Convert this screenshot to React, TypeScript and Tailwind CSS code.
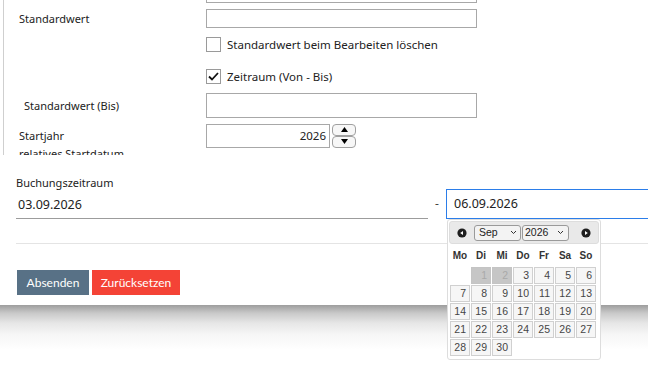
import React from "react";

const Chevron = () => (
  <svg width="7" height="5" viewBox="0 0 7 5" className="ml-auto">
    <path d="M1 1 L3.5 3.5 L6 1" fill="none" stroke="#333" strokeWidth="1" />
  </svg>
);

const Circ = ({ dir }: { dir: "l" | "r" }) => (
  <svg width="10" height="10" viewBox="0 0 10 10">
    <circle cx="5" cy="5" r="4.6" fill="#1e1e1e" />
    {dir === "l" ? (
      <path d="M3.2 5 L6 3 L6 7 Z" fill="#fff" />
    ) : (
      <path d="M6.8 5 L4 3 L4 7 Z" fill="#fff" />
    )}
  </svg>
);

export default function App() {
  const days: (number | null)[] = [null, 1, 2, 3, 4, 5, 6];
  for (let d = 7; d <= 30; d++) days.push(d);
  const names = ["Mo", "Di", "Mi", "Do", "Fr", "Sa", "So"];

  return (
    <div className="relative w-[648px] h-[383px] overflow-hidden bg-white text-[#222]" style={{ fontFamily: '"Noto Sans", sans-serif' }}>
      {/* Top scrolled panel */}
      <div className="ml-[3px] h-[155px] overflow-hidden border-l border-[#cfcfcf]">
        <div className="mt-[-19px] flex flex-col text-[11px]">
          <div className="flex">
            <div className="w-[202px]" />
            <div className="w-[271px] h-[22px] border border-[#a8a8a8] bg-white" />
          </div>
          <div className="flex items-center mt-[6px]">
            <div className="w-[202px] pl-[15px] pt-[2px]">Standardwert</div>
            <div className="w-[271px] h-[19px] border border-[#a8a8a8] bg-white" />
          </div>
          <div className="flex items-center mt-[8px]">
            <div className="w-[202px]" />
            <div className="w-[15px] h-[15px] border border-[#9a9a9a] bg-white" />
            <span className="ml-[6px] text-[11.5px]">Standardwert beim Bearbeiten löschen</span>
          </div>
          <div className="flex items-center mt-[15px]">
            <div className="w-[202px]" />
            <div className="w-[15px] h-[15px] border border-[#9a9a9a] bg-white flex items-center justify-center">
              <svg width="11" height="9" viewBox="0 0 11 9">
                <path d="M1 4.5 L4 7.5 L10 1" fill="none" stroke="#111" strokeWidth="1.8" />
              </svg>
            </div>
            <span className="ml-[6px] text-[11.5px]">Zeitraum (Von - Bis)</span>
          </div>
          <div className="flex items-center mt-[7px]">
            <div className="w-[202px] pl-[20px] pt-[3px]">Standardwert (Bis)</div>
            <div className="w-[271px] h-[25px] border border-[#a8a8a8] bg-white" />
          </div>
          <div className="flex items-center mt-[6px]">
            <div className="w-[202px] pl-[15px] pt-[2px]">Startjahr</div>
            <div className="w-[124px] h-[24px] border border-[#a8a8a8] bg-white flex items-center justify-end pr-[3px] text-[11.5px]">2026</div>
            <div className="ml-[2px] flex flex-col">
              <div className="w-[24px] h-[12px] border border-[#a0a0a0] rounded-[4px] bg-[#f7f7f7] flex items-center justify-center">
                <svg width="7" height="5" viewBox="0 0 7 5"><path d="M0 5 L3.5 0 L7 5 Z" fill="#000" /></svg>
              </div>
              <div className="w-[24px] h-[12px] border border-[#a0a0a0] rounded-[4px] bg-[#f7f7f7] flex items-center justify-center">
                <svg width="7" height="5" viewBox="0 0 7 5"><path d="M0 0 L3.5 5 L7 0 Z" fill="#000" /></svg>
              </div>
            </div>
          </div>
          <div className="pl-[15px] mt-[-2px]">relatives Startdatum</div>
        </div>
      </div>

      {/* Lower form */}
      <div className="px-[16px]">
        <div className="mt-[20px] text-[11px] text-[#222] leading-[16px]">Buchungszeitraum</div>
        <div className="flex items-end mt-[-2px]">
          <div className="w-[412px] shrink-0 h-[27px] border-b border-[#9c9c9c] flex items-center pl-[2px] text-[12.5px]">03.09.2026</div>
          <div className="w-[18px] shrink-0 h-[30px] flex items-center justify-center text-[12px] text-[#444]">-</div>
          <div className="w-[240px] shrink-0 h-[30px] border border-[#2b7de9] flex items-center pl-[7px] text-[12.5px]">06.09.2026</div>
        </div>
        <div className="mt-[24px] h-px bg-[#e4e4e4] mr-[-16px]" />
        <div className="flex gap-[3px] mt-[26px] pl-px" style={{ fontFamily: "Lato, sans-serif" }}>
          <button className="h-[25px] px-[6px] w-[72px] bg-[#587186] text-white text-[12px]">Absenden</button>
          <button className="h-[25px] w-[88px] bg-[#f44336] text-white text-[12px]">Zurücksetzen</button>
        </div>
      </div>
      <div className="mt-[10px] h-[45px] bg-[linear-gradient(to_bottom,#9d9d9d_0%,#c9c9c9_18%,#e6e6e6_40%,#f6f6f6_65%,#ffffff_100%)]" />

      {/* Datepicker popup */}
      <div className="absolute left-[447px] top-[219px] w-[154px] h-[141px] border border-[#dddddd] rounded-[3px] bg-white p-[1px]" style={{ fontFamily: '"Liberation Sans", Arial, sans-serif' }}>
        <div className="h-[23px] bg-[#e9e9e9] border border-[#dddddd] rounded-[3px] flex items-center">
          <div className="ml-[7px]"><Circ dir="l" /></div>
          <div className="ml-[7px] w-[47px] h-[16px] border border-[#9a9a9a] rounded-[3px] bg-[#f3f3f3] flex items-center pl-[4px] pr-[3px] text-[10.5px] text-[#222]">
            Sep<Chevron />
          </div>
          <div className="ml-[1px] w-[47px] h-[16px] border border-[#9a9a9a] rounded-[3px] bg-[#f3f3f3] flex items-center pl-[2px] pr-[4px] text-[10.5px] text-[#222]">
            2026<Chevron />
          </div>
          <div className="ml-[12px]"><Circ dir="r" /></div>
        </div>
        <div className="grid grid-cols-[repeat(7,20px)] gap-x-[1px] ml-[1px] mt-[2px]">
          {names.map((n) => (
            <div key={n} className="h-[19px] flex items-center justify-center text-[10px] font-bold text-[#333]">{n}</div>
          ))}
        </div>
        <div className="grid grid-cols-[repeat(7,20px)] gap-x-[1px] gap-y-[1px] ml-[1px] mt-[2px]">
          {days.map((d, i) =>
            d === null ? (
              <div key={i} className="h-[17px]" />
            ) : d <= 2 ? (
              <div key={i} className="h-[17px] border border-[#c4c4c4] bg-[#c6c6c6] flex items-center justify-end pr-[3px] text-[10.5px] text-[#a9a9a9]">{d}</div>
            ) : (
              <div key={i} className="h-[17px] border border-[#d0d0d0] bg-[#f6f6f6] flex items-center justify-end pr-[3px] text-[10.5px] text-[#454545]">{d}</div>
            )
          )}
        </div>
      </div>
    </div>
  );
}
